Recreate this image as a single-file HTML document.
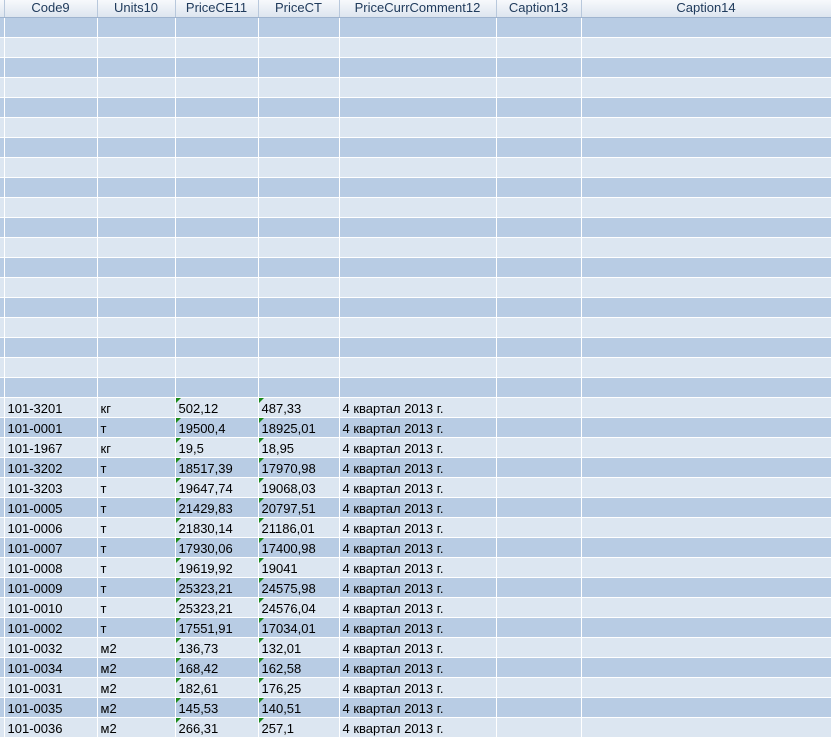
<!DOCTYPE html>
<html><head><meta charset="utf-8"><style>
body{margin:0;width:831px;height:737px;overflow:hidden;background:#dce6f1;font-family:"Liberation Sans",Arial,sans-serif;}
table{border-collapse:collapse;table-layout:fixed;width:831px;}
td,th{padding:0;overflow:hidden;white-space:nowrap;}
th{height:17px;border-bottom:1px solid #9fb4cf;border-right:1px solid #b8c8dc;background:linear-gradient(#f7f9fc,#dde5ef);font-weight:normal;font-size:13px;color:#203b5c;line-height:16px;text-align:center;vertical-align:top;}
td{height:17px;padding-top:2px;border-bottom:1px solid #fff;border-right:1px solid #fff;font-size:13px;color:#000;line-height:17px;padding-left:3px;position:relative;box-sizing:content-box;}
td.f{padding-left:0}
tr.d td{background:#b8cce4;}
tr.l td{background:#dce6f1;}
td.g::before{content:"";position:absolute;left:0;top:0;border-top:5px solid #1a8a1a;border-right:5px solid transparent;}
</style></head><body>
<table>
<colgroup><col style="width:4px"><col style="width:93px"><col style="width:78px"><col style="width:83px"><col style="width:81px"><col style="width:157px"><col style="width:85px"><col style="width:250px"></colgroup>
<tr><th></th><th>Code9</th><th>Units10</th><th>PriceCE11</th><th>PriceCT</th><th>PriceCurrComment12</th><th>Caption13</th><th>Caption14</th></tr>
<tr class="d"><td class="f"></td><td></td><td></td><td></td><td></td><td></td><td></td><td></td></tr>
<tr class="l"><td class="f"></td><td></td><td></td><td></td><td></td><td></td><td></td><td></td></tr>
<tr class="d"><td class="f"></td><td></td><td></td><td></td><td></td><td></td><td></td><td></td></tr>
<tr class="l"><td class="f"></td><td></td><td></td><td></td><td></td><td></td><td></td><td></td></tr>
<tr class="d"><td class="f"></td><td></td><td></td><td></td><td></td><td></td><td></td><td></td></tr>
<tr class="l"><td class="f"></td><td></td><td></td><td></td><td></td><td></td><td></td><td></td></tr>
<tr class="d"><td class="f"></td><td></td><td></td><td></td><td></td><td></td><td></td><td></td></tr>
<tr class="l"><td class="f"></td><td></td><td></td><td></td><td></td><td></td><td></td><td></td></tr>
<tr class="d"><td class="f"></td><td></td><td></td><td></td><td></td><td></td><td></td><td></td></tr>
<tr class="l"><td class="f"></td><td></td><td></td><td></td><td></td><td></td><td></td><td></td></tr>
<tr class="d"><td class="f"></td><td></td><td></td><td></td><td></td><td></td><td></td><td></td></tr>
<tr class="l"><td class="f"></td><td></td><td></td><td></td><td></td><td></td><td></td><td></td></tr>
<tr class="d"><td class="f"></td><td></td><td></td><td></td><td></td><td></td><td></td><td></td></tr>
<tr class="l"><td class="f"></td><td></td><td></td><td></td><td></td><td></td><td></td><td></td></tr>
<tr class="d"><td class="f"></td><td></td><td></td><td></td><td></td><td></td><td></td><td></td></tr>
<tr class="l"><td class="f"></td><td></td><td></td><td></td><td></td><td></td><td></td><td></td></tr>
<tr class="d"><td class="f"></td><td></td><td></td><td></td><td></td><td></td><td></td><td></td></tr>
<tr class="l"><td class="f"></td><td></td><td></td><td></td><td></td><td></td><td></td><td></td></tr>
<tr class="d"><td class="f"></td><td></td><td></td><td></td><td></td><td></td><td></td><td></td></tr>
<tr class="l"><td class="f"></td><td>101-3201</td><td>кг</td><td class="g">502,12</td><td class="g">487,33</td><td>4 квартал 2013 г.</td><td></td><td></td></tr>
<tr class="d"><td class="f"></td><td>101-0001</td><td>т</td><td class="g">19500,4</td><td class="g">18925,01</td><td>4 квартал 2013 г.</td><td></td><td></td></tr>
<tr class="l"><td class="f"></td><td>101-1967</td><td>кг</td><td class="g">19,5</td><td class="g">18,95</td><td>4 квартал 2013 г.</td><td></td><td></td></tr>
<tr class="d"><td class="f"></td><td>101-3202</td><td>т</td><td class="g">18517,39</td><td class="g">17970,98</td><td>4 квартал 2013 г.</td><td></td><td></td></tr>
<tr class="l"><td class="f"></td><td>101-3203</td><td>т</td><td class="g">19647,74</td><td class="g">19068,03</td><td>4 квартал 2013 г.</td><td></td><td></td></tr>
<tr class="d"><td class="f"></td><td>101-0005</td><td>т</td><td class="g">21429,83</td><td class="g">20797,51</td><td>4 квартал 2013 г.</td><td></td><td></td></tr>
<tr class="l"><td class="f"></td><td>101-0006</td><td>т</td><td class="g">21830,14</td><td class="g">21186,01</td><td>4 квартал 2013 г.</td><td></td><td></td></tr>
<tr class="d"><td class="f"></td><td>101-0007</td><td>т</td><td class="g">17930,06</td><td class="g">17400,98</td><td>4 квартал 2013 г.</td><td></td><td></td></tr>
<tr class="l"><td class="f"></td><td>101-0008</td><td>т</td><td class="g">19619,92</td><td class="g">19041</td><td>4 квартал 2013 г.</td><td></td><td></td></tr>
<tr class="d"><td class="f"></td><td>101-0009</td><td>т</td><td class="g">25323,21</td><td class="g">24575,98</td><td>4 квартал 2013 г.</td><td></td><td></td></tr>
<tr class="l"><td class="f"></td><td>101-0010</td><td>т</td><td class="g">25323,21</td><td class="g">24576,04</td><td>4 квартал 2013 г.</td><td></td><td></td></tr>
<tr class="d"><td class="f"></td><td>101-0002</td><td>т</td><td class="g">17551,91</td><td class="g">17034,01</td><td>4 квартал 2013 г.</td><td></td><td></td></tr>
<tr class="l"><td class="f"></td><td>101-0032</td><td>м2</td><td class="g">136,73</td><td class="g">132,01</td><td>4 квартал 2013 г.</td><td></td><td></td></tr>
<tr class="d"><td class="f"></td><td>101-0034</td><td>м2</td><td class="g">168,42</td><td class="g">162,58</td><td>4 квартал 2013 г.</td><td></td><td></td></tr>
<tr class="l"><td class="f"></td><td>101-0031</td><td>м2</td><td class="g">182,61</td><td class="g">176,25</td><td>4 квартал 2013 г.</td><td></td><td></td></tr>
<tr class="d"><td class="f"></td><td>101-0035</td><td>м2</td><td class="g">145,53</td><td class="g">140,51</td><td>4 квартал 2013 г.</td><td></td><td></td></tr>
<tr class="l"><td class="f"></td><td>101-0036</td><td>м2</td><td class="g">266,31</td><td class="g">257,1</td><td>4 квартал 2013 г.</td><td></td><td></td></tr>
</table>
</body></html>
